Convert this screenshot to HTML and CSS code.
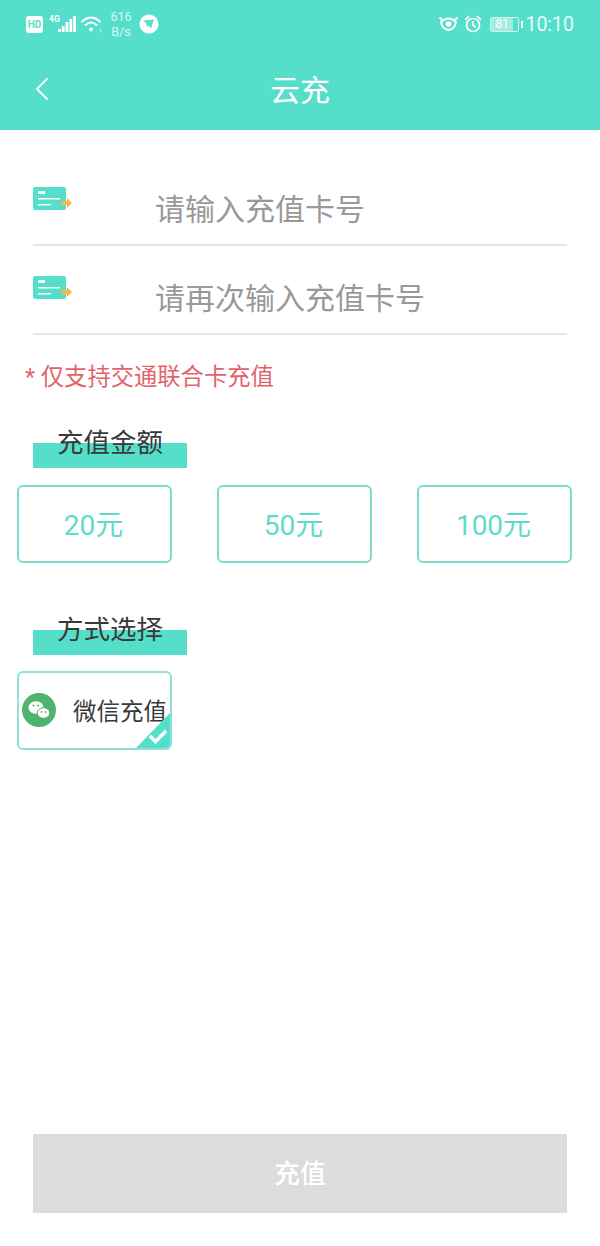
FILE: index.html

```html
<!DOCTYPE html>
<html lang="zh-CN">
<head>
  <meta charset="UTF-8" />
  <meta name="viewport" content="width=device-width, initial-scale=1" />
  <title>云充</title>
  <link rel="stylesheet" href="styles.css">
</head>
<body>

  <header class="top">
    <div class="status-bar">
      <div class="status-left">
        <span class="hd-badge">HD</span>
        <span class="net-type">4G</span>
        <svg class="signal" width="18" height="18" viewBox="0 0 18 18">
          <rect x="0" y="14" width="2.800" height="3" fill="#fff"/>
          <rect x="3.800" y="11" width="2.800" height="6" fill="#fff"/>
          <rect x="7.600" y="7" width="2.800" height="10" fill="#fff"/>
          <rect x="11.400" y="4" width="2.800" height="13" fill="#fff"/>
          <rect x="15.200" y="1" width="2.800" height="16" fill="#fff"/>
        </svg>
        <svg class="wifi" width="22" height="18" viewBox="0 0 22 18" fill="none" stroke="#fff" stroke-width="2" stroke-linecap="round">
          <path d="M1 6.500 Q10 -1.500 19 6.500"/>
          <path d="M4.500 10 Q10 5 15.500 10"/>
          <circle cx="10" cy="14.500" r="2" fill="#fff" stroke="none"/>
          <path d="M19 14.500l1.500 1.500-1.500 1.500" stroke-width="0.800"/>
        </svg>
        <span class="speed">616<br>B/s</span>
        <svg class="app-dot" width="20" height="20" viewBox="0 0 20 20">
          <circle cx="10" cy="10" r="9.500" fill="#fff"/>
          <path d="M4.500 6.500l10.500-1-3 9-2.500-3-2 1.500v-3z" fill="#55dfca"/>
        </svg>
      </div>
      <div class="status-right">
        <svg class="eye" width="19" height="16" viewBox="0 0 19 16" fill="none" stroke="#fff" stroke-width="1.800">
          <path d="M2 6 Q9.500 -1 17 6 Q16 13 9.500 14 Q3 13 2 6z"/>
          <circle cx="9.500" cy="8" r="2.800" fill="#fff" stroke="none"/>
          <path d="M1 2l2 2M18 2l-2 2" stroke-linecap="round"/>
        </svg>
        <svg class="alarm" width="18" height="18" viewBox="0 0 18 18" fill="none" stroke="#fff" stroke-width="1.700">
          <circle cx="9" cy="10" r="6.500"/>
          <path d="M9 6v4.500l3 1.500" stroke-width="1.400"/>
          <path d="M1.500 4.500l3-3M16.500 4.500l-3-3" stroke-linecap="round"/>
        </svg>
        <span class="battery"><span class="battery-level">81</span></span>
        <span class="clock">10:10</span>
      </div>
    </div>
    <div class="nav-bar">
      <svg class="back" width="14" height="24" viewBox="0 0 14 24" fill="none" stroke="#fff" stroke-width="1.800" stroke-linecap="round" stroke-linejoin="round">
        <path d="M12 2L2 12l10 10"/>
      </svg>
      <h1>云充</h1>
    </div>
  </header>

  <main class="content">
    <div class="card-form">
      <div class="card-row">
        <svg class="card-icon" width="39" height="23" viewBox="0 0 39 23">
          <rect width="33" height="23" rx="2" fill="#55dfca"/>
          <rect x="5" y="4" width="7" height="3" fill="#fff"/>
          <rect x="5" y="11" width="22" height="1.500" fill="#fff"/>
          <rect x="5" y="17" width="13" height="1.500" fill="#fff"/>
          <path d="M28 15h6v-3l5 5-5 5v-3h-6z" fill="#f5b64c" transform="translate(0 -1)"/>
        </svg>
        <span class="placeholder">请输入充值卡号</span>
      </div>
      <div class="card-row">
        <svg class="card-icon" width="39" height="23" viewBox="0 0 39 23">
          <rect width="33" height="23" rx="2" fill="#55dfca"/>
          <rect x="5" y="4" width="7" height="3" fill="#fff"/>
          <rect x="5" y="11" width="22" height="1.500" fill="#fff"/>
          <rect x="5" y="17" width="13" height="1.500" fill="#fff"/>
          <path d="M28 15h6v-3l5 5-5 5v-3h-6z" fill="#f5b64c" transform="translate(0 -1)"/>
        </svg>
        <span class="placeholder">请再次输入充值卡号</span>
      </div>
    </div>

    <p class="notice">* 仅支持交通联合卡充值</p>

    <h2 class="section-title">充值金额</h2>
    <div class="amounts">
      <div class="amount">20元</div>
      <div class="amount">50元</div>
      <div class="amount">100元</div>
    </div>

    <h2 class="section-title section-pay">方式选择</h2>
    <div class="amounts">
      <div class="pay-option">
        <svg class="wechat" width="34" height="34" viewBox="0 0 34 34">
          <circle cx="17" cy="17" r="17" fill="#4db36f"/>
          <ellipse cx="14" cy="14.500" rx="7.500" ry="6.300" fill="#fff"/>
          <ellipse cx="21.500" cy="20" rx="6.300" ry="5.300" fill="#fff" stroke="#4db36f" stroke-width="1"/>
          <circle cx="11.500" cy="12.500" r="1" fill="#4db36f"/>
          <circle cx="16" cy="12.500" r="1" fill="#4db36f"/>
          <circle cx="19.500" cy="19" r="0.900" fill="#4db36f"/>
          <circle cx="23.500" cy="19" r="0.900" fill="#4db36f"/>
        </svg>
        <span class="pay-name">微信充值</span>
        <svg class="corner-check" width="38" height="39" viewBox="0 0 38 39">
          <path d="M38 0v39H0z" fill="#55dfca"/>
          <path d="M16 25l5.500 5.500L32 20" fill="none" stroke="#fff" stroke-width="3.500"/>
        </svg>
      </div>
    </div>

    <div class="submit">充值</div>
  </main>

</body>
</html>
```

FILE: styles.css

```css
body {
  margin: 0;
  font-family: Roboto, "Noto Sans CJK SC", sans-serif;
  background: #fff;
  color: #3a3a3a;
}
.top {
  height: 130px;
  background: #55dfca;
  color: #fff;
}
.status-bar {
  height: 48px;
  padding: 0 26px;
  display: flex;
  align-items: center;
  justify-content: space-between;
}
.status-left, .status-right {
  display: flex;
  align-items: center;
}
.hd-badge {
  width: 17px;
  height: 17px;
  border-radius: 3px;
  background: #fff;
  color: #55dfca;
  font-size: 10px;
  font-weight: 700;
  line-height: 17px;
  text-align: center;
}
.net-type {
  width: 10px;
  margin: -11px 0 0 6px;
  font-size: 8.500px;
  font-weight: 700;
}
.signal { margin-left: -1px; }
.wifi { margin-left: 5px; }
.speed {
  margin-left: 6px;
  width: 24px;
  font-size: 12.500px;
  line-height: 15px;
  text-align: center;
  color: #d8f8f2;
}
.app-dot { margin-left: 6px; }
.eye { margin-right: 6px; }
.alarm { margin-right: 7px; }
.battery {
  position: relative;
  width: 29px;
  height: 15px;
  margin-left: 1px;
  margin-right: 6px;
  border: 1px solid #c9f5ed;
  border-radius: 2px;
  box-sizing: border-box;
  display: flex;
}
.battery::after {
  content: "";
  position: absolute;
  right: -5px;
  top: 3px;
  width: 2px;
  height: 7px;
  background: #fff;
}
.battery-level {
  width: 81%;
  background: #a5ece0;
  color: #fff;
  font-size: 12px;
  line-height: 13px;
  text-align: center;
}
.clock {
  font-size: 19.500px;
  color: #e6fbf7;
}
.nav-bar {
  position: relative;
  height: 82px;
  display: flex;
  align-items: center;
  justify-content: center;
}
.nav-bar h1 {
  margin: 0 0 2px 0;
  font-size: 30px;
  font-weight: 400;
}
.back {
  position: absolute;
  left: 35px;
  top: 29px;
}
.content {
  min-height: 1116px;
  box-sizing: border-box;
  padding-bottom: 33px;
  display: flex;
  flex-direction: column;
}
.card-form {
  margin: 27px 33px 0 33px;
}
.card-row {
  height: 89px;
  box-sizing: border-box;
  border-bottom: 2px solid #e6e6e6;
  display: flex;
  align-items: flex-start;
  padding-top: 30px;
}
.card-icon {
  flex: none;
  margin-right: 83px;
}
.placeholder {
  margin-top: 5px;
  font-size: 30px;
  line-height: 36px;
  color: #999;
}
.notice {
  margin: 27px 0 0 25px;
  font-size: 23.300px;
  line-height: 30px;
  color: #e2636c;
}
.section-title {
  width: 154px;
  height: 50px;
  margin: 26px 0 17px 33px;
  font-size: 26.500px;
  font-weight: 400;
  line-height: 50px;
  text-align: center;
  background: linear-gradient(#55dfca, #55dfca) bottom / 100% 25px no-repeat;
}
.section-pay {
  margin-top: 42px;
  margin-bottom: 16px;
}
.amounts {
  margin-left: 17px;
  display: grid;
  grid-template-columns: repeat(3, 155px);
  gap: 45px;
}
.amount {
  height: 78px;
  box-sizing: border-box;
  border: 2px solid #7cdccd;
  border-radius: 6px;
  padding-right: 2px;
  font-size: 28px;
  line-height: 77px;
  text-align: center;
  color: #5fdcc8;
}
.pay-option {
  position: relative;
  height: 79px;
  box-sizing: border-box;
  border: 2px solid #8fe2d5;
  border-radius: 6px;
  padding-left: 3px;
  display: flex;
  align-items: center;
  overflow: hidden;
}
.wechat {
  flex: none;
  margin: -2px 17px 0 0;
}
.pay-name {
  margin-top: -2px;
  font-size: 23.500px;
  white-space: nowrap;
}
.corner-check {
  position: absolute;
  right: -2px;
  bottom: -2px;
}
.submit {
  margin: auto 33px 0 33px;
  height: 79px;
  background: #dcdcdc;
  color: #fff;
  font-size: 26px;
  font-weight: 500;
  line-height: 81px;
  text-align: center;
}
```
